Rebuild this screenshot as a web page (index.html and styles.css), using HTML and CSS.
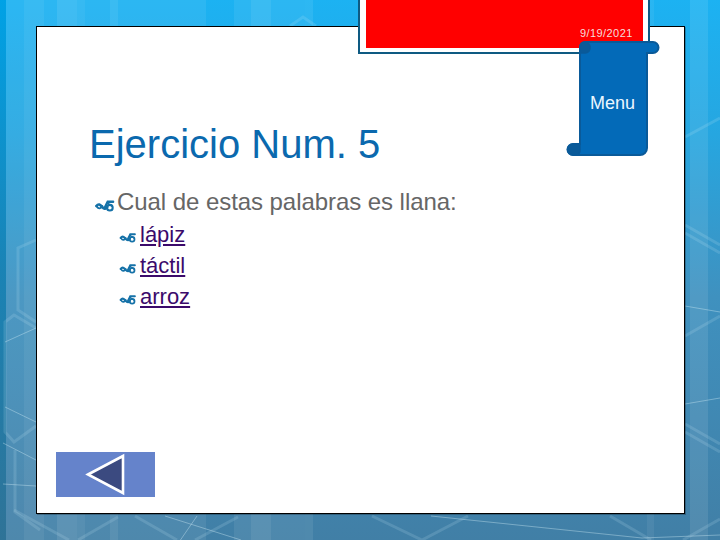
FILE: index.html
```html
<!DOCTYPE html>
<html lang="es">
<head>
<meta charset="utf-8">
<title>Ejercicio Num. 5</title>
<link rel="stylesheet" href="styles.css">
</head>
<body>
<svg class="bg-art" viewBox="0 0 720 540" aria-hidden="true">
  <defs>
    <linearGradient id="sky" x1="0" y1="0" x2="0" y2="1">
      <stop offset="0" stop-color="#1cb2f2"/>
      <stop offset=".25" stop-color="#26a6e0"/>
      <stop offset=".55" stop-color="#3f91bf"/>
      <stop offset="1" stop-color="#417fa6"/>
    </linearGradient>
    <linearGradient id="edge" x1="0" y1="0" x2="0" y2="1">
      <stop offset="0" stop-color="#00a2e6"/>
      <stop offset=".5" stop-color="#1a83b5"/>
      <stop offset="1" stop-color="#2f7397"/>
    </linearGradient>
  </defs>
  <rect width="720" height="540" fill="url(#sky)"/>
  <rect width="6" height="540" fill="url(#edge)"/>
  <g fill="#fff">
    <rect x="6" width="200" height="540" opacity=".07"/>
    <rect x="234" width="71" height="540" opacity=".07"/>
    <rect x="24" width="20" height="540" opacity=".06"/>
    <rect x="57" width="20" height="540" opacity=".09"/>
    <rect x="77" width="8" height="540" opacity=".05"/>
    <rect x="110" width="8" height="540" opacity=".07"/>
    <rect x="251" width="20" height="540" opacity=".07"/>
    <rect x="305" width="8" height="540" opacity=".08"/>
    <rect x="647" width="7" height="540" opacity=".06"/>
    <rect x="690" width="18" height="540" opacity=".09"/>
  </g>
  <g fill="none" stroke="#cfeaf6" stroke-opacity=".16" stroke-width="3">
    <path d="M36 240 18 248V310L36 322"/>
    <path d="M36 328 14 315 5 322V432L14 442 36 426"/>
    <path d="M15 450V512L40 530"/>
    <path d="M14 510 69 540M118 517 78 540M135 516 177 540M238 517 195 540"/>
    <path d="M372 516 422 540M468 516 422 540M610 516 651 540M720 519 683 540"/>
    <path d="M685 137 720 118M685 225 720 245M685 233 720 253"/>
    <path d="M685 336 720 316M685 424 720 444M685 432 720 452"/>
    <path d="M290 26 303 17 316 26"/>
  </g>
  <g fill="none" stroke="#cfeaf6" stroke-opacity=".4" stroke-width="1">
    <path d="M5 342 36 328M5 407 36 422M3 443 36 460M3 484 36 486"/>
    <path d="M165 516 241 540M197 516 177 545"/>
    <path d="M431 516 642 538 720 535"/>
    <path d="M685 306 720 312M685 404 720 398"/>
  </g>
</svg>

<main class="slide">
  <h1 class="title">Ejercicio Num. 5</h1>
  <ul class="outline">
    <li class="question">
      <svg class="fleuron" viewBox="0 0 18 12" aria-hidden="true"><use href="#orn"/></svg>
      <span>Cual de estas palabras es llana:</span>
    </li>
    <li class="answer">
      <svg class="fleuron small" viewBox="0 0 18 12" aria-hidden="true"><use href="#orn"/></svg>
      <a href="#">lápiz</a>
    </li>
    <li class="answer">
      <svg class="fleuron small" viewBox="0 0 18 12" aria-hidden="true"><use href="#orn"/></svg>
      <a href="#">táctil</a>
    </li>
    <li class="answer">
      <svg class="fleuron small" viewBox="0 0 18 12" aria-hidden="true"><use href="#orn"/></svg>
      <a href="#">arroz</a>
    </li>
  </ul>
  <a class="back" href="#" aria-label="Volver">
    <svg viewBox="0 0 99 45" aria-hidden="true"><path d="M32 22.500 67 4V41Z" fill="#3b4a80" stroke="#fff" stroke-width="2.600"/></svg>
  </a>
</main>

<div class="banner"><div class="banner-red"></div></div>
<div class="date">9/19/2021</div>

<svg class="scroll" viewBox="0 0 94 118" aria-hidden="true">
  <path d="M14 7a5 5 0 0 1 5-5h68a5.500 5.500 0 0 1 0 11H81V108a7 7 0 0 1-7 7H7a5.500 5.500 0 0 1 0-11H14Z" fill="#036ab8" stroke="#0a5a99" stroke-width="2"/>
  <path d="M14 13V7a5 5 0 0 1 5-5 5 5 0 0 1 5 5 5 5 0 0 1-5 6ZM14 104H7a5.500 5.500 0 0 0 0 11h3a4 4 0 0 0 4-4Z" fill="#0a5a99" stroke="#0a5a99" stroke-width="1.500"/>
</svg>
<div class="menu">Menu</div>

<svg class="defs" aria-hidden="true">
  <defs>
    <g id="orn" fill="none" stroke="#1672a8" stroke-linecap="round">
      <path d="M1 6.500C3 4 4.500 5 6.500 7.500s3.500 1.500 4.500 0" stroke-width="2.400"/>
      <path d="M1.500 7C3 9.500 5 9 6.500 6.500" stroke-width="1.800"/>
      <path d="M8.500 8.500 11.500 2.500H16.500" stroke-width="2.200"/>
      <circle cx="13.500" cy="8" r="2.600" stroke-width="1.900"/>
      <path d="M11 3.500 15.500 6.500" stroke-width="1.400"/>
    </g>
  </defs>
</svg>
</body>
</html>
```
FILE: styles.css
```css
* { box-sizing: border-box; }
html, body { margin: 0; width: 720px; height: 540px; overflow: hidden; }
body {
  position: relative;
  padding: 26px 35px 26px 36px;
  font-family: "Liberation Sans", Arial, sans-serif;
  background: #2aa5dc;
}
.bg-art { position: absolute; inset: 0; width: 720px; height: 540px; }
.defs { position: absolute; width: 0; height: 0; }

.slide {
  position: relative;
  display: flex;
  flex-direction: column;
  height: 488px;
  padding: 94px 0 0 52px;
  background: #fff;
  border: 1px solid #000;
  box-shadow: 1px 1px 0 rgba(0, 0, 0, .25);
}
.title {
  margin: 0;
  font-size: 40px;
  font-weight: 400;
  line-height: 46px;
  color: #0b69ae;
  white-space: nowrap;
}
.outline { margin: 18px 0 0; padding: 0; list-style: none; }
.outline li { display: flex; align-items: center; }
.question {
  height: 34px;
  margin-left: 6px;
  gap: 2px;
  font-size: 24px;
  letter-spacing: -.06px;
  color: #666;
  white-space: nowrap;
}
.answer { height: 31px; margin-left: 30px; gap: 3px; font-size: 22px; }
.answer a { color: #3b0a6b; text-decoration: underline; }
.fleuron { width: 20px; height: 13px; flex: none; margin-top: 6px; }
.fleuron.small { width: 18px; height: 11px; }
.back {
  display: block;
  position: absolute;
  left: 19px;
  top: 425px;
  width: 99px;
  height: 45px;
  background: #6583cb;
}
.back svg { display: block; width: 99px; height: 45px; }

.banner {
  position: absolute;
  left: 358px;
  top: -4px;
  width: 292px;
  height: 58px;
  padding: 0 5px 4px 6px;
  background: #fff;
  border: 2px solid #0e5a82;
}
.banner-red { height: 100%; background: #f00; }
.date {
  position: absolute;
  left: 580px;
  top: 26px;
  font-size: 11px;
  line-height: 14px;
  color: #f6dcdc;
  letter-spacing: .42px;
}
.scroll { position: absolute; left: 566px; top: 40px; width: 94px; height: 118px; }
.menu {
  position: absolute;
  left: 578px;
  top: 93px;
  width: 69px;
  font-size: 18px;
  line-height: 20px;
  text-align: center;
  color: #eaf6ff;
}
```
